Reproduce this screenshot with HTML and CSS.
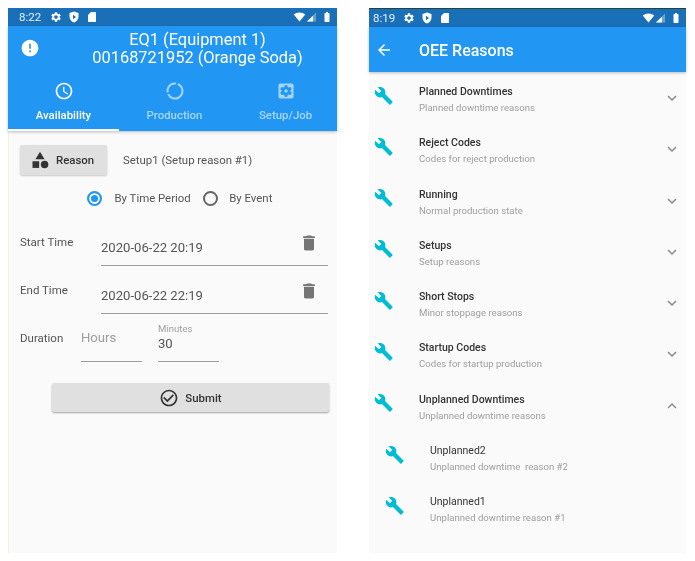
FILE: index.html
```html
<!DOCTYPE html>
<html lang="en">
<head>
    <meta charset="UTF-8">
    <meta name="viewport" content="width=device-width, initial-scale=1.0">
    <title>OEE Screens</title>
    <link rel="stylesheet" href="styles.css">
</head>
<body>

    <!-- Shared icons -->
    <svg class="icon-defs" width="0" height="0">
        <symbol id="i-gear" viewBox="0 0 24 24"><path fill-rule="evenodd" d="M19.14 12.94c.04-.3.06-.61.06-.94 0-.32-.02-.64-.07-.94l2.03-1.58c.18-.14.23-.41.12-.61l-1.92-3.32c-.12-.22-.37-.29-.59-.22l-2.39.96c-.5-.38-1.03-.7-1.62-.94l-.36-2.54c-.04-.24-.24-.41-.48-.41h-3.84c-.24 0-.43.17-.47.41l-.36 2.54c-.59.24-1.13.57-1.62.94l-2.39-.96c-.22-.08-.47 0-.59.22L2.74 8.87c-.12.21-.08.47.12.61l2.03 1.58c-.05.3-.09.63-.09.94s.02.64.07.94l-2.03 1.58c-.18.14-.23.41-.12.61l1.92 3.32c.12.22.37.29.59.22l2.39-.96c.5.38 1.03.7 1.62.94l.36 2.54c.05.24.24.41.48.41h3.84c.24 0 .44-.17.47-.41l.36-2.54c.59-.24 1.13-.56 1.62-.94l2.39.96c.22.08.47 0 .59-.22l1.92-3.32c.12-.22.07-.47-.12-.61l-2.01-1.58zM12 15.6c-1.98 0-3.6-1.62-3.6-3.6s1.62-3.6 3.6-3.6 3.6 1.62 3.6 3.6-1.62 3.6-3.6 3.6z"/></symbol>
        <symbol id="i-shield" viewBox="0 0 24 24"><path fill-rule="evenodd" d="M12 1 3 4v7c0 5.6 3.8 10.7 9 12 5.2-1.3 9-6.4 9-12V4zM10 7.5l6 4.5-6 4.5z"/></symbol>
        <symbol id="i-sd" viewBox="0 0 24 24"><path d="M18 2h-8L4.02 8 4 20c0 1.1.9 2 2 2h12c1.1 0 2-.9 2-2V4c0-1.1-.9-2-2-2z"/></symbol>
        <symbol id="i-wifi" viewBox="0 0 24 24"><path d="M12 21 .5 7C3.5 4.4 7.500 3 12 3s8.500 1.400 11.500 4z"/></symbol>
        <symbol id="i-signal" viewBox="0 0 24 24"><path opacity=".35" d="M22 2v20H2z"/><path d="M15 9v13H2z"/></symbol>
        <symbol id="i-battery" viewBox="0 0 24 24"><path d="M15.700 4H14V2h-4v2H8.300C7.600 4 7 4.600 7 5.300v15.300C7 21.400 7.600 22 8.300 22h7.300c.8 0 1.400-.6 1.400-1.300V5.300C17 4.600 16.400 4 15.700 4z"/></symbol>
        <symbol id="i-wrench" viewBox="0 0 24 24"><path d="M22.700 19l-9.100-9.100c.9-2.300.4-5-1.500-6.900-2-2-5-2.400-7.400-1.300L9 6 6 9 1.600 4.700C.4 7.100.9 10.100 2.900 12.100c1.900 1.900 4.600 2.400 6.900 1.500l9.100 9.100c.4.4 1 .4 1.400 0l2.300-2.300c.5-.4.5-1.100.1-1.400z"/></symbol>
        <symbol id="i-trash" viewBox="0 0 24 24"><path d="M6 19c0 1.100.9 2 2 2h8c1.100 0 2-.9 2-2V7H6v12zM19 4h-3.500l-1-1h-5l-1 1H5v2h14V4z"/></symbol>
        <symbol id="i-more" viewBox="0 0 24 24"><path d="M16.590 8.590 12 13.170 7.410 8.590 6 10l6 6 6-6z"/></symbol>
        <symbol id="i-less" viewBox="0 0 24 24"><path d="M12 8l-6 6 1.410 1.410L12 10.830l4.590 4.580L18 14z"/></symbol>
    </svg>

    <!-- Availability screen -->
    <section class="phone phone-left">
        <div class="status-bar">
            <span class="status-time">8:22</span>
            <svg class="status-icon"><use href="#i-gear"/></svg>
            <svg class="status-icon"><use href="#i-shield"/></svg>
            <svg class="status-icon"><use href="#i-sd"/></svg>
            <span class="status-spacer"></span>
            <svg class="status-icon wifi"><use href="#i-wifi"/></svg>
            <svg class="status-icon signal"><use href="#i-signal"/></svg>
            <svg class="status-icon"><use href="#i-battery"/></svg>
        </div>
        <header class="equip-bar">
            <div class="equip-head">
                <svg class="alert-icon" viewBox="0 0 24 24"><path d="M12 2C6.480 2 2 6.480 2 12s4.480 10 10 10 10-4.480 10-10S17.520 2 12 2zm1 15h-2v-2h2v2zm0-4h-2V7h2v6z"/></svg>
                <h1 class="equip-title">EQ1 (Equipment 1)<br>00168721952 (Orange Soda)</h1>
            </div>
            <nav class="tabs">
                <div class="tab active">
                    <svg class="tab-icon" viewBox="0 0 24 24"><path d="M11.990 2C6.470 2 2 6.480 2 12s4.470 10 9.990 10C17.520 22 22 17.520 22 12S17.520 2 11.990 2zM12 20c-4.420 0-8-3.580-8-8s3.580-8 8-8 8 3.580 8 8-3.580 8-8 8z"/><path d="M12.500 7H11v6l5.250 3.150.75-1.230-4.500-2.670z"/></svg>
                    <span>Availability</span>
                </div>
                <div class="tab">
                    <svg class="tab-icon" viewBox="0 0 24 24"><circle class="ring" cx="12" cy="12" r="9" pathLength="100" stroke-dasharray="62 4 30 4" stroke-dashoffset="-2" transform="rotate(-75 12 12)"/></svg>
                    <span>Production</span>
                </div>
                <div class="tab">
                    <svg class="tab-icon" viewBox="0 0 24 24"><path fill-rule="evenodd" d="M12 10c-1.100 0-2 .9-2 2s.9 2 2 2 2-.9 2-2-.9-2-2-2zm7-7H5c-1.110 0-2 .9-2 2v14c0 1.100.89 2 2 2h14c1.110 0 2-.9 2-2V5c0-1.100-.89-2-2-2zm-1.750 9c0 .23-.02.46-.05.68l1.480 1.160c.13.11.17.3.08.45l-1.400 2.420c-.09.15-.27.21-.43.15l-1.740-.7c-.36.28-.76.51-1.180.69l-.26 1.850c-.03.17-.18.3-.35.3h-2.800c-.17 0-.32-.13-.35-.29l-.26-1.850c-.43-.18-.82-.41-1.180-.69l-1.740.7c-.16.06-.34 0-.43-.15l-1.400-2.420c-.09-.15-.05-.34.08-.45l1.480-1.160c-.03-.23-.05-.46-.05-.69 0-.23.02-.46.05-.68l-1.480-1.160c-.13-.11-.17-.3-.08-.45l1.400-2.420c.09-.15.27-.21.43-.15l1.740.7c.36-.28.76-.51 1.180-.69l.26-1.850c.03-.17.18-.3.35-.3h2.800c.17 0 .32.13.35.29l.26 1.850c.43.18.82.41 1.180.69l1.740-.7c.16-.06.34 0 .43.15l1.400 2.420c.09.15.05.34-.08.45l-1.480 1.160c.03.23.05.46.05.69z"/></svg>
                    <span>Setup/Job</span>
                </div>
            </nav>
        </header>

        <div class="form">
            <div class="reason-row">
                <button class="btn btn-reason">
                    <svg class="btn-icon" viewBox="0 0 24 24"><path d="M12 2l-5.500 9h11z"/><circle cx="17.500" cy="17.500" r="4.500"/><path d="M3 13.500h8v8H3z"/></svg>
                    Reason
                </button>
                <span class="reason-text">Setup1 (Setup reason #1)</span>
            </div>

            <div class="radio-row">
                <span class="radio checked"></span>
                <span class="radio-label">By Time Period</span>
                <span class="radio"></span>
                <span class="radio-label">By Event</span>
            </div>

            <div class="time-row">
                <span class="field-label">Start Time</span>
                <div class="time-field">
                    <span>2020-06-22 20:19</span>
                    <svg class="trash"><use href="#i-trash"/></svg>
                </div>
            </div>

            <div class="time-row">
                <span class="field-label">End Time</span>
                <div class="time-field">
                    <span>2020-06-22 22:19</span>
                    <svg class="trash"><use href="#i-trash"/></svg>
                </div>
            </div>

            <div class="duration-row">
                <span class="duration-label">Duration</span>
                <div class="num-field hours">Hours</div>
                <div class="num-field minutes">
                    <small>Minutes</small>
                    <span>30</span>
                </div>
            </div>

            <button class="btn btn-submit">
                <svg class="btn-icon" viewBox="0 0 24 24"><path d="M16.590 7.580 10 14.170l-3.590-3.580L5 12l5 5 8-8zM12 2C6.480 2 2 6.480 2 12s4.480 10 10 10 10-4.480 10-10S17.520 2 12 2zm0 18c-4.420 0-8-3.580-8-8s3.580-8 8-8 8 3.580 8 8-3.580 8-8 8z"/></svg>
                Submit
            </button>
        </div>
    </section>

    <!-- Reasons screen -->
    <section class="phone phone-right">
        <div class="status-bar">
            <span class="status-time">8:19</span>
            <svg class="status-icon"><use href="#i-gear"/></svg>
            <svg class="status-icon"><use href="#i-shield"/></svg>
            <svg class="status-icon"><use href="#i-sd"/></svg>
            <span class="status-spacer"></span>
            <svg class="status-icon wifi"><use href="#i-wifi"/></svg>
            <svg class="status-icon signal"><use href="#i-signal"/></svg>
            <svg class="status-icon"><use href="#i-battery"/></svg>
        </div>
        <header class="title-bar">
            <svg class="back-icon" viewBox="0 0 24 24"><path d="M20 11H7.830l5.590-5.590L12 4l-8 8 8 8 1.410-1.410L7.830 13H20v-2z"/></svg>
            <h1 class="title-text">OEE Reasons</h1>
        </header>

        <ul class="reasons">
            <li class="reason"><svg class="wrench"><use href="#i-wrench"/></svg><div class="reason-body"><b>Planned Downtimes</b><span>Planned downtime reasons</span></div><svg class="chevron"><use href="#i-more"/></svg></li>
            <li class="reason"><svg class="wrench"><use href="#i-wrench"/></svg><div class="reason-body"><b>Reject Codes</b><span>Codes for reject production</span></div><svg class="chevron"><use href="#i-more"/></svg></li>
            <li class="reason"><svg class="wrench"><use href="#i-wrench"/></svg><div class="reason-body"><b>Running</b><span>Normal production state</span></div><svg class="chevron"><use href="#i-more"/></svg></li>
            <li class="reason"><svg class="wrench"><use href="#i-wrench"/></svg><div class="reason-body"><b>Setups</b><span>Setup reasons</span></div><svg class="chevron"><use href="#i-more"/></svg></li>
            <li class="reason"><svg class="wrench"><use href="#i-wrench"/></svg><div class="reason-body"><b>Short Stops</b><span>Minor stoppage reasons</span></div><svg class="chevron"><use href="#i-more"/></svg></li>
            <li class="reason"><svg class="wrench"><use href="#i-wrench"/></svg><div class="reason-body"><b>Startup Codes</b><span>Codes for startup production</span></div><svg class="chevron"><use href="#i-more"/></svg></li>
            <li class="reason"><svg class="wrench"><use href="#i-wrench"/></svg><div class="reason-body"><b>Unplanned Downtimes</b><span>Unplanned downtime reasons</span></div><svg class="chevron"><use href="#i-less"/></svg></li>
            <li class="reason sub"><svg class="wrench"><use href="#i-wrench"/></svg><div class="reason-body"><em>Unplanned2</em><span>Unplanned downtime&nbsp; reason #2</span></div></li>
            <li class="reason sub"><svg class="wrench"><use href="#i-wrench"/></svg><div class="reason-body"><em>Unplanned1</em><span>Unplanned downtime reason #1</span></div></li>
        </ul>
    </section>

</body>
</html>
```

FILE: styles.css
```css
/* Colours */
:root {
    --blue: #2196f3;
    --blue-dark: #1a70b8;
    --page: #fafafa;
    --text: #333;
    --muted: #9e9e9e;
    --line: #9e9e9e;
    --btn: #e0e0e0;
    --teal: #00bcd4;
}

html, body {
    margin: 0;
    padding: 0;
    background: #fff;
    height: 561px;
    overflow: hidden;
}

body {
    display: flex;
    align-items: flex-start;
    font-family: Roboto, "Liberation Sans", sans-serif;
    color: var(--text);
}

.icon-defs {
    position: absolute;
}

/* The screenshots are slightly soft */
.phone {
    background: var(--page);
    display: flex;
    flex-direction: column;
    filter: blur(0.4px);
}

.phone-left {
    width: 329px;
    height: 545px;
    margin: 8px 0 0 8px;
    box-shadow: inset 1px 0 0 #f3f3e2;
}

.phone-right {
    width: 317px;
    height: 544px;
    margin: 9px 0 0 32px;
}

/* Status bar */
.status-bar {
    height: 18px;
    background: var(--blue-dark);
    display: flex;
    align-items: center;
    padding: 0 4px 0 11px;
    gap: 6px;
    flex-shrink: 0;
    color: #fff;
}

.phone-right .status-bar {
    padding-left: 4px;
    box-shadow: 0 -1px 0 #26452f;
}

.status-time {
    font-size: 11.500px;
    margin-right: 3px;
    color: #e6f0fa;
}

.phone-right .status-time {
    margin-right: 2px;
}

.status-icon {
    width: 12px;
    height: 12px;
    fill: #fff;
}

.status-spacer {
    flex: 1;
}

.status-icon.wifi {
    width: 13px;
    margin-right: -6px;
}

.status-icon.signal {
    width: 11px;
    margin-right: -2px;
}

/* Left screen header */
.equip-bar {
    background: var(--blue);
    color: #fff;
    height: 105px;
    flex-shrink: 0;
    display: flex;
    flex-direction: column;
    box-shadow: 0 1px 3px rgba(0, 0, 0, 0.25);
    position: relative;
    overflow-x: clip;
}

.equip-head {
    display: flex;
    align-items: center;
    height: 44px;
    padding-left: 12px;
}

.alert-icon {
    width: 20px;
    height: 20px;
    fill: #fff;
}

.equip-title {
    flex: 1;
    margin: 2px 0 0;
    padding-left: 18px;
    font-size: 16.400px;
    font-weight: 400;
    line-height: 18.500px;
    text-align: center;
}

.tabs {
    flex: 1;
    display: flex;
}

.tab {
    flex: none;
    width: 111px;
    display: flex;
    flex-direction: column;
    align-items: center;
    gap: 7px;
    padding-top: 11px;
    box-sizing: border-box;
    font-size: 11.400px;
    font-weight: 500;
    color: rgba(255, 255, 255, 0.6);
    fill: rgba(255, 255, 255, 0.6);
}

.tab.active {
    color: #fff;
    fill: #fff;
    border-bottom: 2px solid #fff;
}

.tab-icon {
    width: 20px;
    height: 20px;
}

.ring {
    fill: none;
    stroke: rgba(255, 255, 255, 0.6);
    stroke-width: 2.500;
}

/* Form */
.form {
    display: flex;
    flex-direction: column;
    padding: 14px 9px 0 12px;
}

.btn {
    display: flex;
    align-items: center;
    border: none;
    border-radius: 2px;
    background: var(--btn);
    color: var(--text);
    font-family: inherit;
    font-size: 11.400px;
    font-weight: 500;
    padding: 0;
    box-shadow: 0 1px 2px rgba(0, 0, 0, 0.2);
}

.btn-icon {
    width: 20px;
    height: 20px;
    fill: #333;
}

.reason-row {
    display: flex;
    align-items: center;
    height: 30px;
}

.btn-reason {
    width: 87px;
    height: 30px;
    padding-left: 10px;
    gap: 6px;
}

.reason-text {
    font-size: 11.400px;
    margin-left: 16px;
    color: #555;
}

.radio-row {
    display: flex;
    align-items: center;
    height: 20px;
    margin-top: 13px;
    padding-left: 67px;
    font-size: 11.400px;
    color: #555;
}

.radio {
    width: 11px;
    height: 11px;
    border: 2px solid #666;
    border-radius: 50%;
    flex-shrink: 0;
    box-sizing: content-box;
}

.radio.checked {
    border-color: var(--blue);
    background: var(--blue);
    box-shadow: inset 0 0 0 2px var(--page);
}

.radio-label {
    margin: 0 12.500px;
}

.radio-label:last-child {
    margin-left: 11px;
}

.time-row {
    display: flex;
    height: 48px;
}

.radio-row + .time-row {
    margin-top: 11px;
}

.field-label {
    width: 81px;
    font-size: 11.500px;
    padding-top: 16px;
    color: #555;
}

.time-field {
    flex: 1;
    height: 47px;
    box-sizing: border-box;
    border-bottom: 1px solid var(--line);
    display: flex;
    justify-content: space-between;
    font-size: 13.100px;
    color: #555;
    padding-top: 21px;
}

.trash {
    width: 20px;
    height: 20px;
    fill: #757575;
    margin: -7px 9px 0 0;
}

.duration-row {
    display: flex;
    height: 48px;
    align-items: flex-start;
}

.duration-label {
    width: 61px;
    font-size: 11.500px;
    padding-top: 16px;
    color: #555;
}

.num-field {
    width: 61px;
    height: 47px;
    box-sizing: border-box;
    border-bottom: 1px solid var(--line);
    font-size: 13.100px;
    color: #555;
    display: flex;
    flex-direction: column;
}

.hours {
    color: #9e9e9e;
    padding-top: 15px;
    margin-right: 16px;
}

.minutes {
    padding-top: 8px;
    gap: 2px;
}

.minutes small {
    font-size: 9.600px;
    color: #9e9e9e;
}

.btn-submit {
    width: 277px;
    height: 29px;
    margin: 20px 0 0 32px;
    justify-content: center;
    gap: 6px;
    box-shadow: 0 1px 2px rgba(0, 0, 0, 0.35);
}

/* Right screen */
.title-bar {
    height: 45px;
    background: var(--blue);
    color: #fff;
    flex-shrink: 0;
    display: flex;
    align-items: center;
    padding-left: 6px;
    box-shadow: 0 1px 3px rgba(0, 0, 0, 0.25);
    position: relative;
}

.back-icon {
    width: 18px;
    height: 18px;
    fill: #fff;
}

.title-text {
    margin: 2px 0 0 26px;
    font-size: 16px;
    font-weight: 500;
}

.reasons {
    list-style: none;
    margin: 0;
    padding: 5px 0 0;
}

.reason {
    display: flex;
    height: 51.300px;
    align-items: flex-start;
    padding: 8px 5px 0 5px;
    box-sizing: border-box;
}

.wrench {
    width: 19.500px;
    height: 19.500px;
    margin-top: 0.500px;
    fill: var(--teal);
}

.reason-body {
    flex: 1;
    display: flex;
    flex-direction: column;
    gap: 3px;
    margin-left: 25.500px;
    font-size: 9.600px;
    color: var(--muted);
}

.reason-body b,
.reason-body em {
    font-size: 10.500px;
    line-height: 14px;
    color: var(--text);
}

.reason-body b {
    font-weight: 500;
}

.reason-body em {
    font-style: normal;
}

.chevron {
    width: 18px;
    height: 18px;
    fill: #8a8a8a;
    margin-top: 4px;
}

.reason.sub {
    padding-left: 16px;
}
```
